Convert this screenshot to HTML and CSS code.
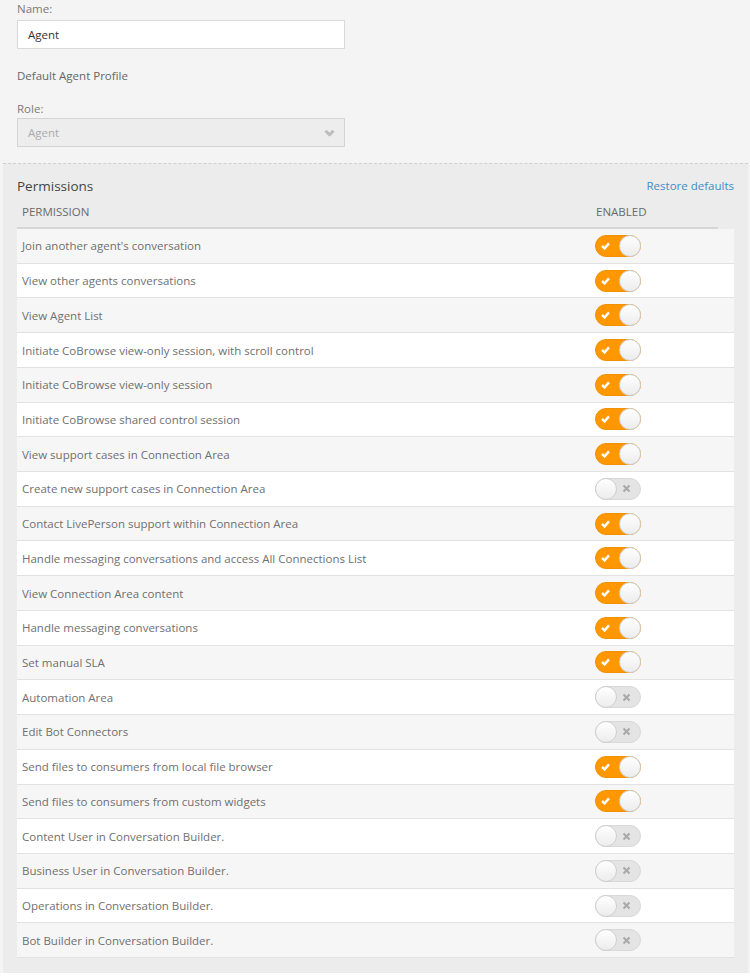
FILE: index.html
```html
<!DOCTYPE html>
<html>
<head>
<meta charset="utf-8">
<link rel="stylesheet" href="styles.css">
</head>
<body>
<div class="page">
  <div class="top">
    <div class="label">Name:</div>
    <div class="input">Agent</div>
    <div class="profile">Default Agent Profile</div>
    <div class="label role">Role:</div>
    <div class="select">
      <span>Agent</span>
      <svg class="chev" width="11" height="8" viewBox="0 0 11 8"><path d="M1.5 1.8 L5.5 5.8 L9.5 1.8" fill="none" stroke="#bcbcbc" stroke-width="3" stroke-linejoin="round"/></svg>
    </div>
  </div>
  <div class="panel">
    <div class="panel-head">
      <span class="title">Permissions</span>
      <a class="restore">Restore defaults</a>
    </div>
    <div class="thead">
      <span class="col-perm">PERMISSION</span>
      <span class="col-en">ENABLED</span>
    </div>
    <div class="rows">
      <div class="row"><span>Join another agent's conversation</span><span class="tg on"><svg class="ic" width="9" height="8" viewBox="0 0 9 8"><path d="M1 4 L3.6 6.4 L8 1.4" fill="none" stroke="#fff" stroke-width="2.4"/></svg></span></div>
      <div class="row"><span>View other agents conversations</span><span class="tg on"><svg class="ic" width="9" height="8" viewBox="0 0 9 8"><path d="M1 4 L3.6 6.4 L8 1.4" fill="none" stroke="#fff" stroke-width="2.4"/></svg></span></div>
      <div class="row"><span>View Agent List</span><span class="tg on"><svg class="ic" width="9" height="8" viewBox="0 0 9 8"><path d="M1 4 L3.6 6.4 L8 1.4" fill="none" stroke="#fff" stroke-width="2.4"/></svg></span></div>
      <div class="row"><span>Initiate CoBrowse view-only session, with scroll control</span><span class="tg on"><svg class="ic" width="9" height="8" viewBox="0 0 9 8"><path d="M1 4 L3.6 6.4 L8 1.4" fill="none" stroke="#fff" stroke-width="2.4"/></svg></span></div>
      <div class="row"><span>Initiate CoBrowse view-only session</span><span class="tg on"><svg class="ic" width="9" height="8" viewBox="0 0 9 8"><path d="M1 4 L3.6 6.4 L8 1.4" fill="none" stroke="#fff" stroke-width="2.4"/></svg></span></div>
      <div class="row"><span>Initiate CoBrowse shared control session</span><span class="tg on"><svg class="ic" width="9" height="8" viewBox="0 0 9 8"><path d="M1 4 L3.6 6.4 L8 1.4" fill="none" stroke="#fff" stroke-width="2.4"/></svg></span></div>
      <div class="row"><span>View support cases in Connection Area</span><span class="tg on"><svg class="ic" width="9" height="8" viewBox="0 0 9 8"><path d="M1 4 L3.6 6.4 L8 1.4" fill="none" stroke="#fff" stroke-width="2.4"/></svg></span></div>
      <div class="row"><span>Create new support cases in Connection Area</span><span class="tg off"><svg class="ic" width="9" height="9" viewBox="0 0 9 9"><path d="M1.5 1.5 L7.5 7.5 M7.5 1.5 L1.5 7.5" fill="none" stroke="#a9a9a9" stroke-width="2"/></svg></span></div>
      <div class="row"><span>Contact LivePerson support within Connection Area</span><span class="tg on"><svg class="ic" width="9" height="8" viewBox="0 0 9 8"><path d="M1 4 L3.6 6.4 L8 1.4" fill="none" stroke="#fff" stroke-width="2.4"/></svg></span></div>
      <div class="row"><span>Handle messaging conversations and access All Connections List</span><span class="tg on"><svg class="ic" width="9" height="8" viewBox="0 0 9 8"><path d="M1 4 L3.6 6.4 L8 1.4" fill="none" stroke="#fff" stroke-width="2.4"/></svg></span></div>
      <div class="row"><span>View Connection Area content</span><span class="tg on"><svg class="ic" width="9" height="8" viewBox="0 0 9 8"><path d="M1 4 L3.6 6.4 L8 1.4" fill="none" stroke="#fff" stroke-width="2.4"/></svg></span></div>
      <div class="row"><span>Handle messaging conversations</span><span class="tg on"><svg class="ic" width="9" height="8" viewBox="0 0 9 8"><path d="M1 4 L3.6 6.4 L8 1.4" fill="none" stroke="#fff" stroke-width="2.4"/></svg></span></div>
      <div class="row"><span>Set manual SLA</span><span class="tg on"><svg class="ic" width="9" height="8" viewBox="0 0 9 8"><path d="M1 4 L3.6 6.4 L8 1.4" fill="none" stroke="#fff" stroke-width="2.4"/></svg></span></div>
      <div class="row"><span>Automation Area</span><span class="tg off"><svg class="ic" width="9" height="9" viewBox="0 0 9 9"><path d="M1.5 1.5 L7.5 7.5 M7.5 1.5 L1.5 7.5" fill="none" stroke="#a9a9a9" stroke-width="2"/></svg></span></div>
      <div class="row"><span>Edit Bot Connectors</span><span class="tg off"><svg class="ic" width="9" height="9" viewBox="0 0 9 9"><path d="M1.5 1.5 L7.5 7.5 M7.5 1.5 L1.5 7.5" fill="none" stroke="#a9a9a9" stroke-width="2"/></svg></span></div>
      <div class="row"><span>Send files to consumers from local file browser</span><span class="tg on"><svg class="ic" width="9" height="8" viewBox="0 0 9 8"><path d="M1 4 L3.6 6.4 L8 1.4" fill="none" stroke="#fff" stroke-width="2.4"/></svg></span></div>
      <div class="row"><span>Send files to consumers from custom widgets</span><span class="tg on"><svg class="ic" width="9" height="8" viewBox="0 0 9 8"><path d="M1 4 L3.6 6.4 L8 1.4" fill="none" stroke="#fff" stroke-width="2.4"/></svg></span></div>
      <div class="row"><span>Content User in Conversation Builder.</span><span class="tg off"><svg class="ic" width="9" height="9" viewBox="0 0 9 9"><path d="M1.5 1.5 L7.5 7.5 M7.5 1.5 L1.5 7.5" fill="none" stroke="#a9a9a9" stroke-width="2"/></svg></span></div>
      <div class="row"><span>Business User in Conversation Builder.</span><span class="tg off"><svg class="ic" width="9" height="9" viewBox="0 0 9 9"><path d="M1.5 1.5 L7.5 7.5 M7.5 1.5 L1.5 7.5" fill="none" stroke="#a9a9a9" stroke-width="2"/></svg></span></div>
      <div class="row"><span>Operations in Conversation Builder.</span><span class="tg off"><svg class="ic" width="9" height="9" viewBox="0 0 9 9"><path d="M1.5 1.5 L7.5 7.5 M7.5 1.5 L1.5 7.5" fill="none" stroke="#a9a9a9" stroke-width="2"/></svg></span></div>
      <div class="row"><span>Bot Builder in Conversation Builder.</span><span class="tg off"><svg class="ic" width="9" height="9" viewBox="0 0 9 9"><path d="M1.5 1.5 L7.5 7.5 M7.5 1.5 L1.5 7.5" fill="none" stroke="#a9a9a9" stroke-width="2"/></svg></span></div>
    </div>
  </div>
</div>
</body>
</html>
```
FILE: styles.css
```css
html, body { margin: 0; padding: 0; background: #fff; }
body { font-family: "Open Sans", "Liberation Sans", sans-serif; font-size: 11.5px; color: #707070; }
.page { width: 750px; background: #f4f4f4; }
.top { padding: 2px 0 16px 17px; }
.label { color: #7a7a7a; height: 18px; line-height: 14px; }
.label.role { height: 16px; }
.input { width: 316px; height: 27px; line-height: 27px; background: #fff; border: 1px solid #d9d9d9; padding-left: 10px; color: #333; }
.profile { color: #666; margin-top: 19px; height: 34px; line-height: 16px; }
.select { width: 316px; height: 27px; line-height: 27px; background: #ededed; border: 1px solid #d4d4d4; padding-left: 10px; color: #aaa; display: flex; justify-content: space-between; align-items: center; }
.chev { margin-right: 9px; }
.panel { margin-left: 3px; margin-right: 2px; border-top: 1px dashed #d0d0d0; background: #ececec; padding: 0 14px 15px 14px; }
.panel-head { display: flex; justify-content: space-between; align-items: flex-end; height: 31px; }
.title { font-size: 13.5px; color: #444; line-height: 18px; }
.restore { color: #3d8ec7; font-size: 11.5px; line-height: 18px; }
.thead { display: flex; height: 32px; align-items: center; margin-right: 16px; border-bottom: 2px solid #d6d6d6; font-size: 11.5px; color: #6a6a6a; }
.col-perm { padding-left: 5px; width: 574px; }
.row { display: flex; align-items: center; justify-content: space-between; height: 33.73px; border-bottom: 1px solid #e2e2e2; padding-left: 5px; background: #f6f6f6; color: #707070; }
.row:nth-child(even) { background: #fff; }
.tg { position: relative; width: 44px; height: 20px; border-radius: 11px; margin-right: 93px; border: 1px solid #d9d9d9; }
.tg.on { background: #ff9800; border-color: #f19000; }
.tg.off { background: #e4e4e4; }
.tg::after { content: ""; position: absolute; top: -1px; width: 20px; height: 20px; border-radius: 50%; background: linear-gradient(#fff, #ececec); border: 1px solid #cfcfcf; }
.tg.on::after { right: -1px; }
.tg.off::after { left: -1px; }
.ic { position: absolute; top: 6px; }
.tg.on .ic { left: 5px; }
.tg.off .ic { right: 9px; top: 5.5px; }
```
